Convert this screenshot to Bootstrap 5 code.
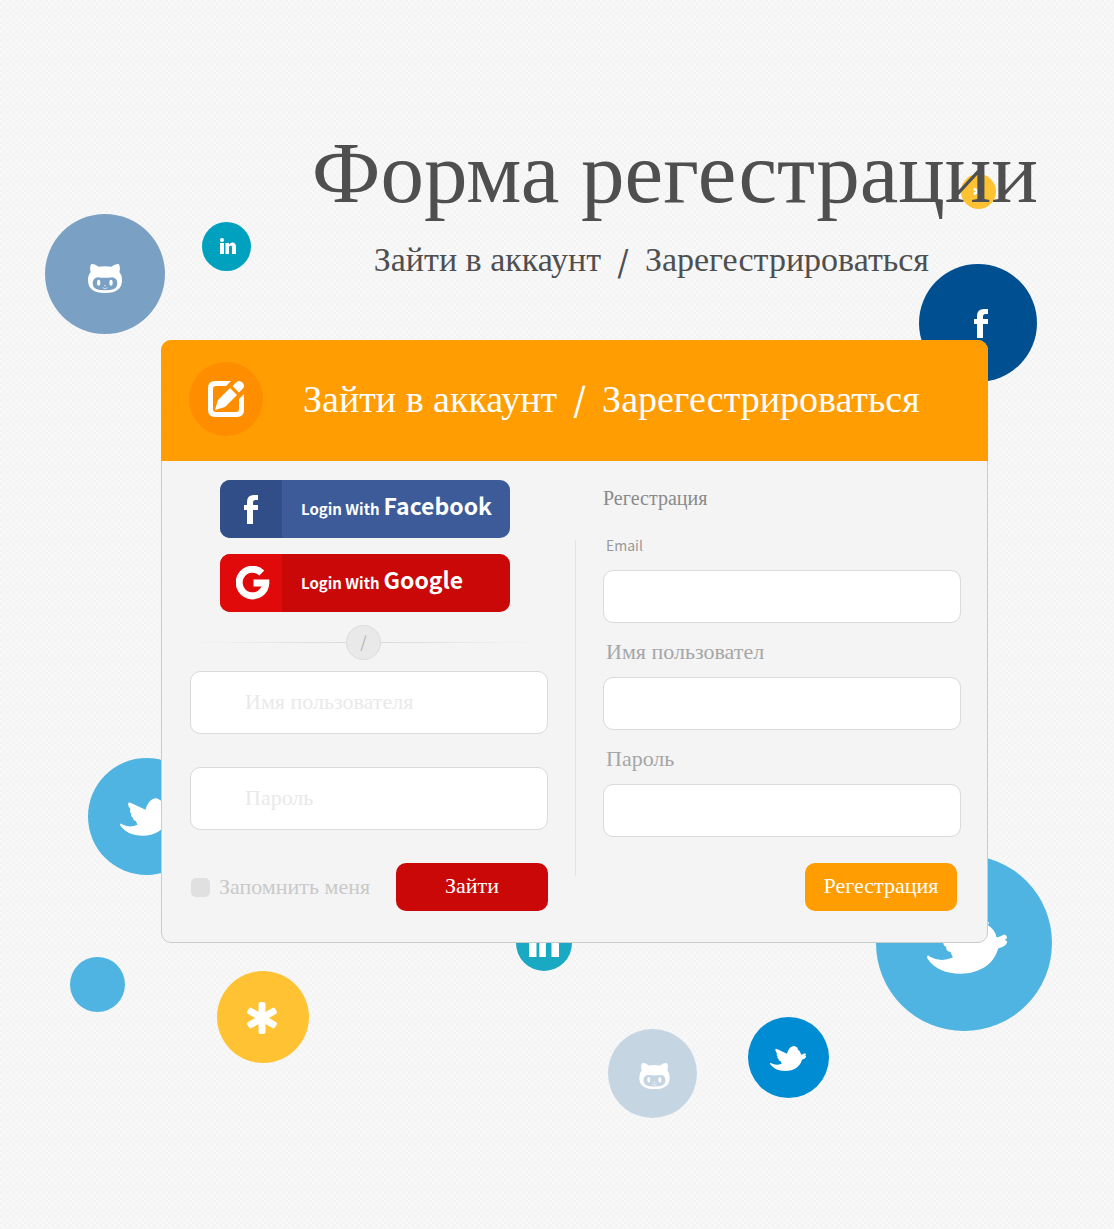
<!DOCTYPE html>
<html lang="ru">
<head>
<meta charset="utf-8">
<meta name="viewport" content="width=device-width, initial-scale=1">
<title>Форма регестрации</title>
<link href="https://cdn.jsdelivr.net/npm/bootstrap@5.3.0/dist/css/bootstrap.min.css" rel="stylesheet">
<style>
  :root { --serif: "Liberation Serif", serif; --sans: "Noto Sans CJK SC", "Open Sans", sans-serif; }
  body {
    font-family: var(--serif);
    color: #4f4f4f;
    background: repeating-conic-gradient(#f4f4f4 0 25%, #f8f8f8 0 50%) 0 0 / 6px 6px;
  }
  .stage { min-height: 1229px; padding: 118px 126px 0 161px; overflow: hidden; }
  .bubble { position: absolute; z-index: 0; }
  .hero-head { position: relative; z-index: 1; height: 222px; margin-right: -50px; }
  .hero-title { font-size: 87px; line-height: 110px; font-weight: 400; white-space: nowrap; }
  .hero-sub { font-size: 34px; line-height: 64px; padding-right: 109px; white-space: nowrap; gap: 16px; }
  .slash { font-family: var(--sans); font-size: 30px; font-weight: 500; line-height: inherit; }
  .panel { position: relative; z-index: 1; background: #f4f4f4; border: 1px solid #cbcbcb; border-radius: 10px; }
  .panel-top { background: #ff9d02; color: #fff; height: 121px; margin: -1px -1px 0; border-radius: 10px 10px 0 0; padding: 0 28px 3px; gap: 40px; }
  .panel-icon { width: 74px; height: 74px; background: #ff8d00; }
  .panel-title { font-size: 38px; line-height: 48px; font-weight: 400; gap: 16px; white-space: nowrap; }
  .panel-title .slash { font-size: 33px; line-height: 46px; }
  .panel-main { padding: 19px 26px 31px 28px; gap: 27px; }
  .half { flex: 1 1 0; min-width: 0; }
  .rule { width: 1px; background: #e3e3e3; margin: 60px 0 35px; }
  .social { width: 290px; height: 58px; margin: 0 0 16px 30px; border: 0; border-radius: 10px; color: #fff; font-family: var(--sans); font-size: 15px; font-weight: 700; line-height: 32px; overflow: hidden; }
  .social b { font-size: 23px; font-weight: 700; margin-left: 4px; }
  .social-icon { width: 62px; }
  .social-text { padding: 0 0 4px 19px; }
  .fb { background: #3d5b99; } .fb .social-icon { background: #314e88; }
  .gg { background: #ca0808; } .gg .social-icon { background: #e00a0a; padding-left: 4px; }
  .divide { margin: -3px 0 11px; padding-right: 11px; }
  .divide-line { height: 1px; background: linear-gradient(90deg, transparent, #dadada); }
  .divide-line:last-child { background: linear-gradient(270deg, transparent, #dadada); }
  .divide-dot { width: 35px; height: 35px; background: #e9e9e9; border: 1px solid #dcdcdc; color: #b0b0b0; font-family: var(--sans); font-size: 16px; line-height: 20px; padding-bottom: 4px; }
  .field { border: 1px solid #dbdbdb; border-radius: 10px; height: 53px; font-size: 22px; color: #777; }
  .field-lg { height: 63px; padding-left: 54px; padding-bottom: 8px; margin-bottom: 33px; }
  .field-lg::placeholder { color: #e9e9e9; opacity: 1; }
  .caption { font-size: 20px; line-height: 24px; font-weight: 400; color: #8a8a8a; margin: 6px 0 24px; }
  .tag-line { display: block; font-size: 22px; line-height: 22px; margin: 0 0 14px 3px; color: #a6a6a6; }
  .tag-latin { font-family: var(--sans); font-size: 14px; color: #999; }
  .entry { margin-bottom: 18px; }
  .act { width: 152px; height: 48px; border: 0; border-radius: 10px; color: #fff; font-size: 22px; line-height: 28px; padding: 0 0 3px; }
  .act, .act:hover { color: #fff; }
  .act-login, .act-login:hover { background: #ca0808; }
  .act-join, .act-join:hover { background: #ff9d02; }
  .tick { appearance: none; width: 19px; height: 19px; border-radius: 5px; background: #e0e0e0; margin: 0 9px 0 1px; }
  .tick:checked { background: #ff9d02; }
  .remember { font-size: 22px; line-height: 28px; color: #c9c9c9; }
</style>
</head>
<body>
<svg class="d-none" aria-hidden="true">
  <symbol id="cat" viewBox="0 0 102 87"><path fill-rule="evenodd" d="M9 1Q18-2 32 8Q51 5 70 8Q84-2 93 1Q98 12 94 24Q102 33 102 49Q102 87 51 87Q0 87 0 49Q0 33 8 24Q4 12 9 1ZM29 40Q14 42 14 59Q14 79 51 79Q88 79 88 59Q88 42 73 40Q51 43 29 40Z"/><ellipse cx="32" cy="56" rx="5" ry="9"/><ellipse cx="69" cy="56" rx="5" ry="9"/><circle cx="51" cy="65" r="2"/><path d="M44 71Q51 78 58 71" fill="none" stroke="#fff" stroke-width="2"/></symbol>
  <symbol id="bird" viewBox="0 0 108 75"><path d="M16 12Q16 7 21 9L51 23C54 11 62 0 72 0Q76 0 79 3L84 6L82 9Q92 15 94 26Q100 25 104 22Q108 23 108 27L105 29L108 31Q109 37 96 41C91 61 72 75 45 75C26 75 10 68 1 55C-1 52 1 48 4 52Q18 60 35 53Q33 49 32 46Q25 44 26 39Q20 36 23 31Q18 27 21 22Q17 18 16 12Z"/></symbol>
  <symbol id="inn" viewBox="0 0 32 32"><circle cx="4" cy="4" r="4"/><path d="M0 10H8V32H0ZM11 10H18V13Q21 9 25 9Q32 9 32 18V32H24V19Q24 15 21.500 15Q18 15 18 19V32H11Z"/></symbol>
  <symbol id="eff" viewBox="0 0 14 29"><path d="M14 0V5H11.500Q9 5 9 7.500V10H14V15H9V29H3V15H0V10H3V7Q3 0 10 0Z"/></symbol>
  <symbol id="star" viewBox="0 0 30 32"><rect x="11.500" y="0" width="7" height="32" rx="2"/><rect x="11.500" y="0" width="7" height="32" rx="2" transform="rotate(60 15 16)"/><rect x="11.500" y="0" width="7" height="32" rx="2" transform="rotate(-60 15 16)"/></symbol>
</svg>

<main class="stage position-relative">
  <svg class="bubble" style="left:45px;top:214px" width="120" height="120" fill="#fff" aria-hidden="true"><circle cx="60" cy="60" r="60" fill="#7aa1c4"/><use href="#cat" x="43" y="50" width="34" height="29"/></svg>
  <svg class="bubble" style="left:202px;top:222px" width="49" height="49" fill="#fff" aria-hidden="true"><circle cx="24.500" cy="24.500" r="24.500" fill="#00a1be"/><use href="#inn" x="18" y="16" width="16" height="16"/></svg>
  <svg class="bubble" style="left:961px;top:174px" width="35" height="35" fill="#fff" aria-hidden="true"><circle cx="17.500" cy="17.500" r="17.500" fill="#ffc233"/><use href="#star" x="12" y="12" width="11" height="11"/></svg>
  <svg class="bubble" style="left:919px;top:264px" width="118" height="118" fill="#fff" aria-hidden="true"><circle cx="59" cy="59" r="59" fill="#004f91"/><use href="#eff" x="55" y="45" width="14" height="29"/></svg>
  <svg class="bubble" style="left:88px;top:758px" width="117" height="117" fill="#fff" aria-hidden="true"><circle cx="58.500" cy="58.500" r="58.500" fill="#4fb4e1"/><use href="#bird" x="32" y="40" width="54" height="38"/></svg>
  <svg class="bubble" style="left:70px;top:957px" width="55" height="55" aria-hidden="true"><circle cx="27.500" cy="27.500" r="27.500" fill="#4fb4e1"/></svg>
  <svg class="bubble" style="left:217px;top:971px" width="92" height="92" fill="#fff" aria-hidden="true"><circle cx="46" cy="46" r="46" fill="#ffc233"/><use href="#star" x="30" y="31" width="30" height="32"/></svg>
  <svg class="bubble" style="left:516px;top:915px" width="56" height="56" fill="#fff" aria-hidden="true"><circle cx="28" cy="28" r="28" fill="#1aa9c3"/><use href="#inn" x="13" y="12" width="30" height="30"/></svg>
  <svg class="bubble" style="left:876px;top:855px" width="176" height="176" fill="#fff" aria-hidden="true"><circle cx="88" cy="88" r="88" fill="#4fb4e1"/><use href="#bird" x="51" y="63" width="80" height="56"/></svg>
  <svg class="bubble" style="left:608px;top:1029px" width="89" height="89" fill="#fff" aria-hidden="true"><circle cx="44.500" cy="44.500" r="44.500" fill="#c5d5e2"/><use href="#cat" x="31" y="34" width="31" height="26"/></svg>
  <svg class="bubble" style="left:748px;top:1017px" width="81" height="81" fill="#fff" aria-hidden="true"><circle cx="40.500" cy="40.500" r="40.500" fill="#008cd3"/><use href="#bird" x="22" y="29" width="36" height="25"/></svg>

  <header class="hero-head d-flex flex-column align-items-end">
    <h1 class="hero-title m-0">Форма регестрации</h1>
    <p class="hero-sub d-flex m-0"><span>Зайти в аккаунт</span><span class="slash">/</span><span>Зарегестрироваться</span></p>
  </header>

  <section class="panel">
    <div class="panel-top d-flex align-items-center">
      <span class="panel-icon rounded-circle d-flex align-items-center justify-content-center flex-shrink-0">
        <svg width="36" height="36" viewBox="0 0 36 36" fill="#fff" aria-hidden="true"><path d="M23 0L18 5H8Q5 5 5 8V28Q5 31 8 31H28Q31 31 31 28V18L36 13V29Q36 36 29 36H7Q0 36 0 29V7Q0 0 7 0Z"/><path d="M7 29L10 19L22 7L29 14L17 26Z"/><path d="M24.500 5L28 1.500Q31-1.500 34.500 1.500Q37.500 5 34.500 8L31 11.500Z"/></svg>
      </span>
      <h2 class="panel-title d-flex m-0"><span>Зайти в аккаунт</span><span class="slash">/</span><span>Зарегестрироваться</span></h2>
    </div>

    <div class="panel-main d-flex">
      <form class="half d-flex flex-column">
        <button type="button" class="social fb d-flex p-0">
          <span class="social-icon h-100 d-flex align-items-center justify-content-center"><svg width="14" height="29" fill="#fff" aria-hidden="true"><use href="#eff"/></svg></span>
          <span class="social-text align-self-center">Login With<b>Facebook</b></span>
        </button>
        <button type="button" class="social gg d-flex p-0">
          <span class="social-icon h-100 d-flex align-items-center justify-content-center"><svg width="34" height="34" viewBox="0 0 34 34" aria-hidden="true"><path d="M25.800 7A13.300 13.300 0 1 0 29.800 17" fill="none" stroke="#fff" stroke-width="7"/><path fill="#fff" d="M17.500 13.500H33.300V17.500L30 20.500H17.500Z"/></svg></span>
          <span class="social-text align-self-center">Login With<b>Google</b></span>
        </button>
        <div class="divide d-flex align-items-center">
          <span class="divide-line flex-fill"></span>
          <span class="divide-dot rounded-circle d-flex align-items-center justify-content-center">/</span>
          <span class="divide-line flex-fill"></span>
        </div>
        <input type="text" class="form-control field field-lg" placeholder="Имя пользователя" aria-label="Имя пользователя">
        <input type="password" class="form-control field field-lg" placeholder="Пароль" aria-label="Пароль">
        <div class="d-flex align-items-center mt-auto">
          <input type="checkbox" class="tick" id="keep">
          <label class="remember text-nowrap" for="keep">Запомнить меня</label>
          <button type="submit" class="btn act act-login ms-auto">Зайти</button>
        </div>
      </form>

      <div class="rule"></div>

      <form class="half d-flex flex-column">
        <h3 class="caption">Регестрация</h3>
        <div class="entry"><label class="tag-line tag-latin" for="mail">Email</label><input type="email" id="mail" class="form-control field"></div>
        <div class="entry"><label class="tag-line" for="user">Имя пользовател</label><input type="text" id="user" class="form-control field"></div>
        <div class="entry"><label class="tag-line" for="pass">Пароль</label><input type="password" id="pass" class="form-control field"></div>
        <button type="submit" class="btn act act-join ms-auto me-1 mt-auto">Регестрация</button>
      </form>
    </div>
  </section>
</main>
<script src="https://cdn.jsdelivr.net/npm/bootstrap@5.3.0/dist/js/bootstrap.bundle.min.js"></script>
</body>
</html>
